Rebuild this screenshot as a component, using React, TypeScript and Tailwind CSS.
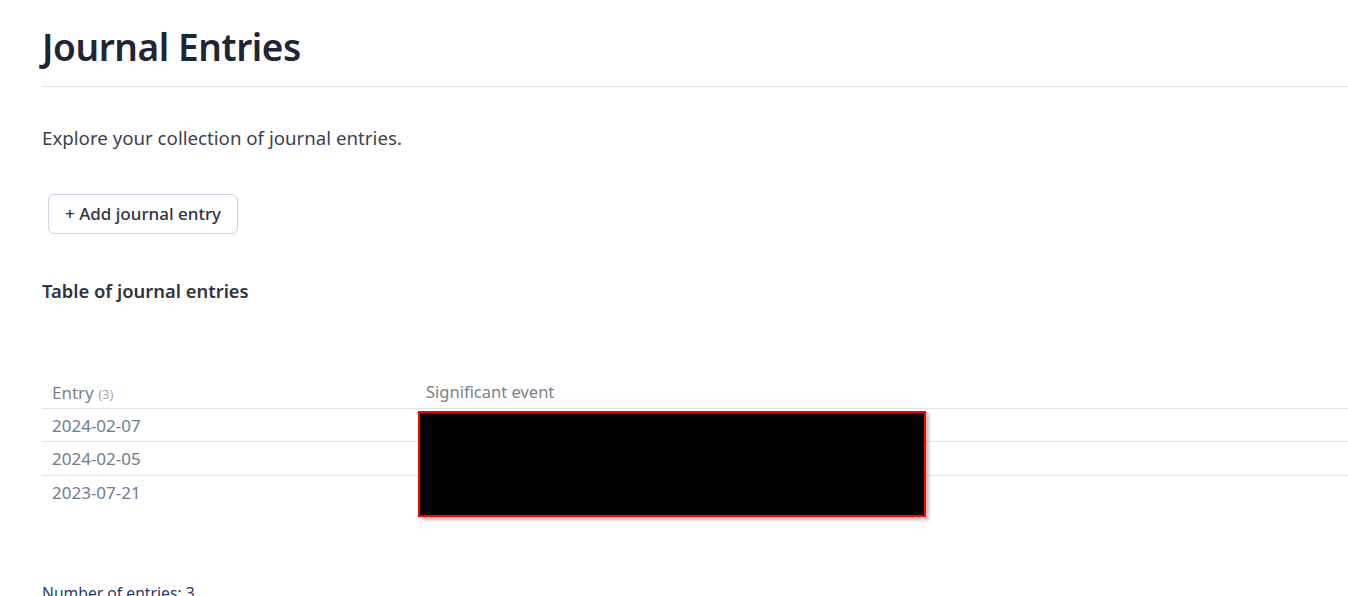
import React from "react";

const rows = ["2024-02-07", "2024-02-05", "2023-07-21"];

const App = () => {
    return <div className="relative min-h-[596px] bg-white overflow-hidden" style={{ fontFamily: '"Noto Sans", "Open Sans", sans-serif' }}>
        <section className="pl-[42px]">
            <h1 className="mt-[23px] pb-[15px] border-b border-[#e3e3e3] text-[37px] leading-[48px] font-semibold text-[#1f2534] tracking-[-0.4px]">Journal Entries</h1>
            <p className="mt-[37px] text-[18.7px] leading-[27px] text-[#3b4150]">Explore your collection of journal entries.</p>
            <button className="mt-[43px] ml-[6px] h-[40px] px-[16px] rounded-[6px] border border-[#c9d2e2] bg-white text-[17px] font-medium text-[#2f3441]">+ Add journal entry</button>
            <h2 className="mt-[43px] text-[18.4px] leading-[27px] font-semibold text-[#2f3441]">Table of journal entries</h2>

            <table className="mt-[71px] w-full border-collapse text-left">
                <thead>
                    <tr className="h-[33px] border-b border-[#e3e3e3]">
                        <th className="w-[374px] pl-[10px] pt-[2px] font-normal text-[17px] text-[#7a7f88]">Entry <span className="text-[13px] text-[#a3a8b0]">(3)</span></th>
                        <th className="pl-[10px] pt-[2px] font-normal text-[16.5px] text-[#7a7f88]">Significant event</th>
                    </tr>
                </thead>
                <tbody>
                    {rows.map((d, i) => (
                        <tr key={d} className={i < rows.length - 1 ? "h-[33.5px] border-b border-[#e3e3e3]" : "h-[33px]"}>
                            <td className="pl-[10px] pt-[1px] text-[17px] text-[#6d7d90]">{d}</td>
                            <td></td>
                        </tr>
                    ))}
                </tbody>
            </table>

            <p className="mt-[73px] text-[15.7px] leading-[24px] text-[#2b3a6e]">Number of entries: 3</p>
        </section>

        {/* redaction box over the event column */}
        <div className="absolute left-[418px] top-[411px] w-[508px] h-[106px] bg-black border-2 border-[#ff0000] shadow-[3px_3px_3px_rgba(0,0,0,0.25)]"></div>
    </div>;
};

export default App;
